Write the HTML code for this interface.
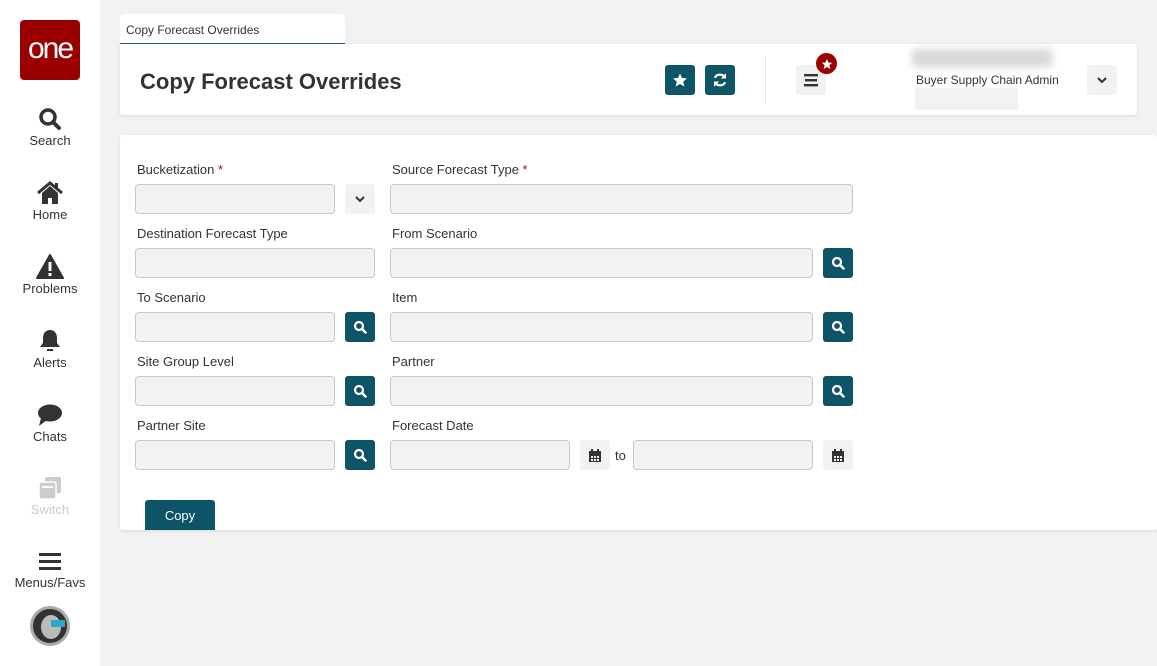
<!DOCTYPE html>
<html><head><meta charset="utf-8"><style>
*{box-sizing:border-box;margin:0;padding:0}
body{width:1157px;height:666px;background:#f2f2f2;font-family:"Liberation Sans",sans-serif;position:relative;overflow:hidden;color:#333}
.side{position:absolute;left:0;top:0;width:100px;height:666px;background:#fff}
.logo{position:absolute;left:20px;top:20px;width:60px;height:60px;background:#9b0000;border-radius:4px;color:#fff;font-size:30px;text-align:center;line-height:58px;letter-spacing:-2px}
.nav{position:absolute;left:0;width:100px;text-align:center;font-size:13px;color:#333}
.nav svg{display:block;margin:0 auto 2px}
.abs{position:absolute}
.tab{left:120px;top:14px;width:225px;height:31px;background:#fff;border-radius:4px 4px 0 0;border-bottom:2px solid #1a6273;font-size:12px;padding:9px 6px;color:#333}
.hdr{left:120px;top:44px;width:1017px;height:71px;background:#fff;border-radius:0 3px 3px 3px;box-shadow:0 1px 3px rgba(0,0,0,.1)}
.hdr h1{position:absolute;left:20px;top:25px;font-size:22px;font-weight:bold;color:#333}
.tb{width:30px;height:30px;border-radius:3px;background:#0d5466;display:flex;align-items:center;justify-content:center}
.gb{width:30px;height:30px;border-radius:3px;background:#f2f2f2;display:flex;align-items:center;justify-content:center}
.card{left:120px;top:135px;width:1037px;height:395px;background:#fff;border-radius:3px;box-shadow:0 1px 3px rgba(0,0,0,.1)}
.lbl{position:absolute;font-size:13px;color:#333;margin-top:1px}
.lbl b{color:#c00;font-weight:normal}
.in{position:absolute;height:30px;background:#f2f2f2;border:1px solid #c8c8c8;border-radius:4px}
</style></head><body>
<div class="side">
<div class="logo">one</div>
<div class="nav" style="top:107px"><svg width="24" height="24" viewBox="0 0 24 24"><circle cx="10" cy="10" r="7" fill="none" stroke="#333" stroke-width="3.5"/><path d="M15 15l6 6" stroke="#333" stroke-width="4" stroke-linecap="round"/></svg>Search</div>
<div class="nav" style="top:181px"><svg width="28" height="24" viewBox="0 0 28 24"><path d="M2 12L14 2l12 10" fill="none" stroke="#333" stroke-width="3"/><path d="M6 12v11h6v-6h4v6h6V12L14 5z" fill="#333"/><rect x="19" y="2" width="3" height="6" fill="#333"/></svg>Home</div>
<div class="nav" style="top:254px"><svg width="28" height="25" viewBox="0 0 28 25"><path d="M14 1L27 24H1z" fill="#333" stroke="#333" stroke-linejoin="round" stroke-width="2"/><rect x="12.5" y="8" width="3" height="9" fill="#fff"/><rect x="12.5" y="19" width="3" height="3" fill="#fff"/></svg>Problems</div>
<div class="nav" style="top:328px"><svg width="24" height="25" viewBox="0 0 24 25"><path d="M12 2c-5 0-7 4-7 8v5l-3 4h20l-3-4v-5c0-4-2-8-7-8z" fill="#333"/><rect x="9" y="21" width="6" height="2" fill="#333"/></svg>Alerts</div>
<div class="nav" style="top:404px"><svg width="26" height="23" viewBox="0 0 26 23"><ellipse cx="13" cy="9" rx="12" ry="8.5" fill="#333"/><path d="M4 14L2 22l8-6z" fill="#333"/></svg>Chats</div>
<div class="nav" style="top:476px;color:#ccc"><svg width="26" height="24" viewBox="0 0 26 24"><rect x="8" y="1" width="16" height="16" rx="2" fill="#ccc"/><rect x="2" y="6" width="17" height="17" rx="2" fill="#ccc" stroke="#fff" stroke-width="1.5"/><rect x="5" y="10" width="11" height="2" fill="#fff"/></svg>Switch</div>
<div class="nav" style="top:551px"><svg width="24" height="22" viewBox="0 0 24 22"><rect x="1" y="2" width="22" height="3" fill="#333"/><rect x="1" y="9" width="22" height="3" fill="#333"/><rect x="1" y="16" width="22" height="3" fill="#333"/></svg>Menus/Favs</div>
<div class="abs" style="left:30px;top:606px;width:40px;height:40px;border-radius:50%;background:#333;border:3px solid #aaa"><div style="position:absolute;left:8px;top:6px;width:20px;height:24px;border-radius:50%;background:#bbb"></div><div style="position:absolute;left:18px;top:11px;width:14px;height:7px;background:#2aa8c8"></div></div>
</div>
<div class="abs tab">Copy Forecast Overrides</div>
<div class="abs hdr"><h1>Copy Forecast Overrides</h1>
<div class="abs tb" style="left:545px;top:21px"><svg width="16" height="16" viewBox="0 0 24 24"><path d="M12 2l3 7 7.5.6-5.7 5 1.8 7.4L12 18l-6.6 4 1.8-7.4-5.7-5L9 9z" fill="#fff"/></svg></div>
<div class="abs tb" style="left:585px;top:21px"><svg width="18" height="18" viewBox="0 0 24 24"><path d="M19 9a8 8 0 0 0-14 0M5 15a8 8 0 0 0 14 0" fill="none" stroke="#fff" stroke-width="3"/><path d="M20 3v7h-7zM4 21v-7h7z" fill="#fff"/></svg></div>
<div class="abs" style="left:645px;top:12px;width:1px;height:48px;background:#e5e5e5"></div>
<div class="abs gb" style="left:676px;top:21px"><svg width="14" height="14" viewBox="0 0 14 14"><rect y="1" width="14" height="2.4" fill="#333"/><rect x="1" y="6" width="12" height="2.4" fill="#333"/><rect y="11" width="14" height="2.4" fill="#333"/></svg></div>
<div class="abs" style="left:696px;top:9px;width:21px;height:21px;border-radius:50%;background:#9b0000;display:flex;align-items:center;justify-content:center"><svg width="12" height="12" viewBox="0 0 24 24"><path d="M12 2l3 7 7.5.6-5.7 5 1.8 7.4L12 18l-6.6 4 1.8-7.4-5.7-5L9 9z" fill="#fff"/></svg></div>
<div class="abs" style="left:792px;top:5px;width:140px;height:18px;background:#d8d8d8;filter:blur(4px)"></div>
<div class="abs" style="left:796px;top:29px;font-size:12px;color:#333">Buyer Supply Chain Admin</div>
<div class="abs" style="left:795px;top:44px;width:103px;height:22px;background:#f2f2f2"></div>
<div class="abs gb" style="left:967px;top:21px"><svg width="10" height="8" viewBox="0 0 10 8"><path d="M1 2l4 4 4-4" fill="none" stroke="#333" stroke-width="2"/></svg></div>
</div>
<div class="abs card"></div>
<div class="lbl" style="left:137px;top:161px">Bucketization <b>*</b></div>
<div class="lbl" style="left:392px;top:161px">Source Forecast Type <b>*</b></div>
<div class="in" style="left:135px;top:184px;width:200px"></div>
<div class="abs gb" style="left:345px;top:184px"><svg width="10" height="8" viewBox="0 0 10 8"><path d="M1 2l4 4 4-4" fill="none" stroke="#333" stroke-width="2"/></svg></div>
<div class="in" style="left:390px;top:184px;width:463px"></div>
<div class="lbl" style="left:137px;top:225px">Destination Forecast Type</div>
<div class="lbl" style="left:392px;top:225px">From Scenario</div>
<div class="in" style="left:135px;top:248px;width:240px"></div>
<div class="in" style="left:390px;top:248px;width:423px"></div>
<div class="abs tb s" style="left:823px;top:248px"></div>
<div class="lbl" style="left:137px;top:289px">To Scenario</div>
<div class="lbl" style="left:392px;top:289px">Item</div>
<div class="in" style="left:135px;top:312px;width:200px"></div>
<div class="abs tb s" style="left:345px;top:312px"></div>
<div class="in" style="left:390px;top:312px;width:423px"></div>
<div class="abs tb s" style="left:823px;top:312px"></div>
<div class="lbl" style="left:137px;top:353px">Site Group Level</div>
<div class="lbl" style="left:392px;top:353px">Partner</div>
<div class="in" style="left:135px;top:376px;width:200px"></div>
<div class="abs tb s" style="left:345px;top:376px"></div>
<div class="in" style="left:390px;top:376px;width:423px"></div>
<div class="abs tb s" style="left:823px;top:376px"></div>
<div class="lbl" style="left:137px;top:417px">Partner Site</div>
<div class="lbl" style="left:392px;top:417px">Forecast Date</div>
<div class="in" style="left:135px;top:440px;width:200px"></div>
<div class="abs tb s" style="left:345px;top:440px"></div>
<div class="in" style="left:390px;top:440px;width:180px"></div>
<div class="abs gb c" style="left:580px;top:440px"></div>
<div class="lbl" style="left:615px;top:447px">to</div>
<div class="in" style="left:633px;top:440px;width:180px"></div>
<div class="abs gb c" style="left:823px;top:440px"></div>
<div class="abs" style="left:145px;top:500px;width:70px;height:30px;background:#0d5466;border-radius:3px 3px 0 0;color:#fff;font-size:13px;text-align:center;line-height:31px">Copy</div>
<script>
document.querySelectorAll('.s').forEach(e=>e.innerHTML='<svg width="14" height="14" viewBox="0 0 14 14"><circle cx="6" cy="6" r="4" fill="none" stroke="#fff" stroke-width="2.2"/><path d="M9 9l3.5 3.5" stroke="#fff" stroke-width="2.6" stroke-linecap="round"/></svg>');
document.querySelectorAll('.c').forEach(e=>e.innerHTML='<svg width="12" height="13" viewBox="0 0 12 13"><rect x="2" y="0" width="2" height="3" fill="#333"/><rect x="8" y="0" width="2" height="3" fill="#333"/><rect x="0" y="2" width="12" height="3" fill="#333"/><rect x="0" y="5" width="12" height="8" fill="#333"/><g fill="#f2f2f2"><rect x="2" y="7" width="2" height="2"/><rect x="5" y="7" width="2" height="2"/><rect x="8" y="7" width="2" height="2"/><rect x="2" y="10" width="2" height="2"/><rect x="5" y="10" width="2" height="2"/><rect x="8" y="10" width="2" height="2"/></g></svg>');
</script>
</body></html>
